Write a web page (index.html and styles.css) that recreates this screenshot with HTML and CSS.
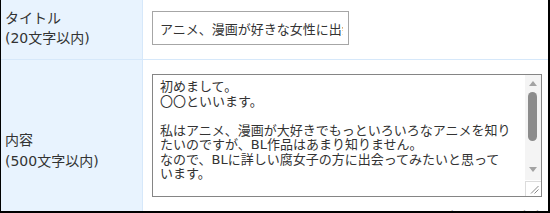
FILE: index.html
```html
<!DOCTYPE html>
<html lang="ja">
<head>
  <meta charset="UTF-8" />
  <title>投稿フォーム</title>
  <link rel="stylesheet" href="styles.css">
</head>
<body>
  <div class="form">
    <div class="row row-title">
      <div class="label">
        <div class="label-line">タイトル</div>
        <div class="label-line">(20文字以内)</div>
      </div>
      <div class="field">
        <input type="text" class="input" value="アニメ、漫画が好きな女性に出会いたい" />
      </div>
    </div>

    <div class="row row-body">
      <div class="label">
        <div class="label-line">内容</div>
        <div class="label-line">(500文字以内)</div>
      </div>
      <div class="field">
        <div class="textarea-wrap">
          <textarea class="textarea">初めまして。
〇〇といいます。

私はアニメ、漫画が大好きでもっといろいろなアニメを知り
たいのですが、BL作品はあまり知りません。
なので、BLに詳しい腐女子の方に出会ってみたいと思って
います。</textarea>
          <!-- fake windows style scrollbar -->
          <div class="scrollbar">
            <span class="arrow arrow-up"></span>
            <span class="thumb"></span>
            <span class="arrow arrow-down"></span>
          </div>
          <div class="resizer">
            <svg width="9" height="9" viewBox="0 0 9 9">
              <line x1="1" y1="8.5" x2="8.5" y2="1" stroke="#8a8a8a" stroke-width="1" />
              <line x1="4.5" y1="8.5" x2="8.5" y2="4.5" stroke="#8a8a8a" stroke-width="1" />
            </svg>
          </div>
        </div>
        <div class="counter">現在 146/500文字</div>
      </div>
    </div>
  </div>
  <div class="frame"></div>
</body>
</html>
```

FILE: styles.css
```css
body {
  margin: 0;
  width: 550px;
  height: 213px;
  overflow: hidden;
  background: #ffffff;
  font-family: "DejaVu Sans", "Noto Sans CJK JP", sans-serif;
  color: #333333;
}

.form {
  width: 548px;
}

.row {
  display: grid;
  grid-template-columns: 143px 1fr;
  border-bottom: 1px solid #d6e8fa;
}

.row-title {
  height: 59px;
}

.row-body {
  height: 180px;
}

.label {
  display: flex;
  flex-direction: column;
  justify-content: center;
  box-sizing: border-box;
  padding-left: 5px;
  background: #e8f3fe;
  border-right: 1px solid #d6e8fa;
  font-size: 14px;
}

.label-line {
  height: 20px;
  line-height: 20px;
  white-space: nowrap;
}

.row-title .label {
  padding-bottom: 4px;
}

.row-body .label-line + .label-line {
  margin-top: 1px;
}

.row-title .field {
  padding: 11px 0 0 9px;
}

.row-body .field {
  padding: 14px 0 0 9px;
}

.input {
  box-sizing: border-box;
  width: 197px;
  height: 34px;
  padding: 0 5px 0 7px;
  border: 1px solid #a6a6a6;
  border-radius: 0;
  font-family: inherit;
  font-size: 13px;
  color: #333333;
  outline: none;
}

.textarea-wrap {
  position: relative;
  width: 390px;
  height: 123px;
}

.textarea {
  display: block;
  box-sizing: border-box;
  width: 390px;
  height: 123px;
  margin: 0;
  padding: 5px 20px 0 7px;
  border: 1px solid #858585;
  border-radius: 0;
  font-family: inherit;
  font-size: 13px;
  line-height: 14.5px;
  color: #333333;
  white-space: pre;
  overflow: hidden;
  resize: none;
  outline: none;
}

.scrollbar {
  position: absolute;
  top: 1px;
  right: 1px;
  width: 16px;
  height: 105px;
  background: #f4f4f4;
}

.arrow {
  position: absolute;
  left: 4px;
  width: 0;
  height: 0;
  border-left: 4px solid transparent;
  border-right: 4px solid transparent;
}

.arrow-up {
  top: 6px;
  border-bottom: 5px solid #a3a3a3;
}

.arrow-down {
  top: 92px;
  border-top: 5px solid #a3a3a3;
}

.thumb {
  position: absolute;
  top: 17px;
  left: 3px;
  width: 9px;
  height: 49px;
  border-radius: 5px;
  background: #8c8c8c;
}

.resizer {
  position: absolute;
  right: 1px;
  bottom: 1px;
  width: 16px;
  height: 15px;
  box-sizing: border-box;
  border-top: 1px solid #dcdcdc;
  border-left: 1px solid #dcdcdc;
  background: #ffffff;
  display: flex;
  align-items: flex-end;
  justify-content: flex-end;
  padding: 0 2px 2px 0;
}

.resizer svg {
  display: block;
}

.counter {
  margin-top: 12px;
  padding-right: 4px;
  text-align: right;
  font-size: 13px;
  line-height: 16px;
  color: #aaaaaa;
}

.frame {
  position: fixed;
  top: 0;
  left: 0;
  right: 0;
  bottom: 0;
  border-left: 1px solid #000000;
  border-right: 2px solid #000000;
  border-bottom: 2px solid #000000;
  pointer-events: none;
}
```
